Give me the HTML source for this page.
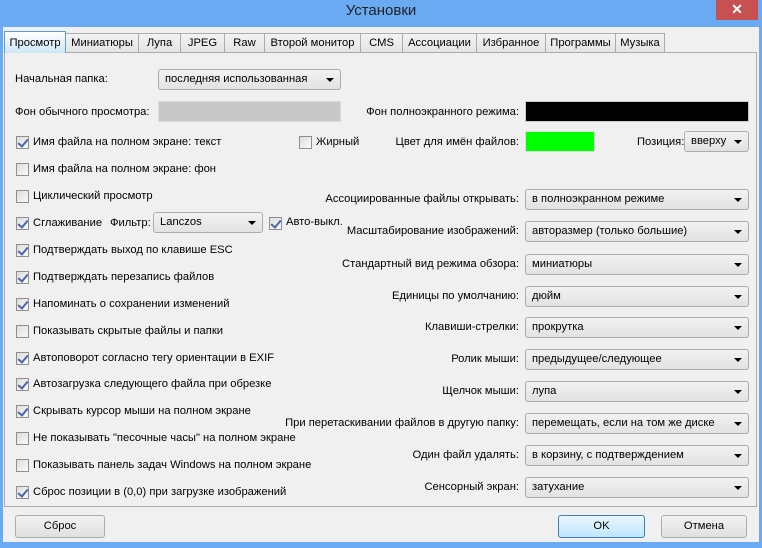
<!DOCTYPE html>
<html><head><meta charset="utf-8"><style>
*{box-sizing:border-box;margin:0;padding:0}
body{width:762px;height:548px;background:#6aaaf3;position:relative;overflow:hidden;font-family:"Liberation Sans",Arial,sans-serif;font-size:11.2px;color:#000}
.abs{position:absolute}
#client{position:absolute;left:3px;top:27px;width:756px;height:515px;background:#f0f0f0}
.title{position:absolute;left:0;width:762px;top:2px;text-align:center;font-size:15px;color:#222}
.close{position:absolute;left:716px;top:0;width:42px;height:20px;background:#c75050;color:#fff;text-align:center;font-size:14px;line-height:19px;font-weight:bold}
.tab{position:absolute;top:33px;height:20px;border:1px solid #acacac;border-bottom:none;background:linear-gradient(#f3f3f3,#e3e3e3);text-align:center;line-height:18px;white-space:nowrap}
.tab.act{top:31px;height:22px;background:linear-gradient(#fff,#cfe7f8);border-color:#5a9fd4;z-index:2;line-height:22px}
#panel{position:absolute;left:4px;top:52px;width:753px;height:455px;border:1px solid #acacac;background:#f0f0f0}
.lbl{position:absolute;white-space:nowrap;line-height:14px}
.r{text-align:right}
.cb{position:absolute;width:13px;height:13px;border:1px solid #8f8f8f;background:linear-gradient(135deg,#dcdcdc,#fafafa)}
.cb.c::after{content:"";position:absolute;left:3px;top:0px;width:4px;height:8px;border:solid #4a66a8;border-width:0 2px 2px 0;transform:rotate(40deg)}
.dd{position:absolute;height:21px;border:1px solid #acacac;border-radius:3px;background:linear-gradient(#f2f2f2,#e2e2e2);padding-left:6px;line-height:19px;white-space:nowrap}
.dd::after{content:"";position:absolute;right:6px;top:8px;border:4px solid transparent;border-top:4px solid #000;border-bottom:none}
.btn{position:absolute;top:515px;height:23px;border:1px solid #acacac;border-radius:3px;background:linear-gradient(#f2f2f2,#e0e0e0);text-align:center;line-height:21px}
.btn.ok{border-color:#3c7fb1;background:linear-gradient(#eaf6fd,#bee6fd)}
</style></head><body>
<div id="client"></div>
<div class="title">Установки</div>
<div class="close">✕</div>
<div class="tab act" style="left:4px;width:62px">Просмотр</div>
<div class="tab" style="left:65px;width:74px">Миниатюры</div>
<div class="tab" style="left:138px;width:43px">Лупа</div>
<div class="tab" style="left:180px;width:45px">JPEG</div>
<div class="tab" style="left:224px;width:41px">Raw</div>
<div class="tab" style="left:264px;width:97px">Второй монитор</div>
<div class="tab" style="left:360px;width:43px">CMS</div>
<div class="tab" style="left:402px;width:75px">Ассоциации</div>
<div class="tab" style="left:476px;width:70px">Избранное</div>
<div class="tab" style="left:545px;width:71px">Программы</div>
<div class="tab" style="left:615px;width:50px">Музыка</div>
<div id="panel"></div>

<div class="lbl" style="left:15px;top:72px">Начальная папка:</div>
<div class="dd" style="left:158px;top:69px;width:183px">последняя использованная</div>
<div class="lbl" style="left:15px;top:105px">Фон обычного просмотра:</div>
<div class="abs" style="left:158px;top:101px;width:183px;height:21px;background:#c8c8c8;border:1px solid #dadada"></div>
<div class="lbl r" style="left:300px;width:219px;top:105px">Фон полноэкранного режима:</div>
<div class="abs" style="left:525px;top:101px;width:224px;height:21px;background:#000;border:1px solid #ccc"></div>

<div class="cb c" style="left:16px;top:136px"></div><div class="lbl" style="left:33px;top:135px">Имя файла на полном экране: текст</div>
<div class="cb" style="left:299px;top:136px"></div><div class="lbl" style="left:316px;top:135px">Жирный</div>
<div class="lbl r" style="left:300px;width:219px;top:135px">Цвет для имён файлов:</div>
<div class="abs" style="left:525px;top:131px;width:70px;height:21px;background:#00ff00;border:1px solid #ddd"></div>
<div class="lbl" style="left:637px;top:135px">Позиция:</div>
<div class="dd" style="left:684px;top:131px;width:65px">вверху</div>

<div class="cb" style="left:16px;top:163px"></div><div class="lbl" style="left:33px;top:162px">Имя файла на полном экране: фон</div>
<div class="cb" style="left:16px;top:190px"></div><div class="lbl" style="left:33px;top:189px">Циклический просмотр</div>
<div class="cb c" style="left:16px;top:217px"></div><div class="lbl" style="left:33px;top:216px">Сглаживание</div>
<div class="lbl" style="left:110px;top:216px">Фильтр:</div>
<div class="dd" style="left:153px;top:212px;width:110px">Lanczos</div>
<div class="cb c" style="left:269px;top:217px"></div><div class="lbl" style="left:286px;top:215px">Авто-выкл.</div>
<div class="cb c" style="left:16px;top:244px"></div><div class="lbl" style="left:33px;top:243px">Подтверждать выход по клавише ESC</div>
<div class="cb c" style="left:16px;top:271px"></div><div class="lbl" style="left:33px;top:270px">Подтверждать перезапись файлов</div>
<div class="cb c" style="left:16px;top:298px"></div><div class="lbl" style="left:33px;top:297px">Напоминать о сохранении изменений</div>
<div class="cb" style="left:16px;top:325px"></div><div class="lbl" style="left:33px;top:324px">Показывать скрытые файлы и папки</div>
<div class="cb c" style="left:16px;top:352px"></div><div class="lbl" style="left:33px;top:351px">Автоповорот согласно тегу ориентации в EXIF</div>
<div class="cb c" style="left:16px;top:378px"></div><div class="lbl" style="left:33px;top:377px">Автозагрузка следующего файла при обрезке</div>
<div class="cb c" style="left:16px;top:405px"></div><div class="lbl" style="left:33px;top:404px">Скрывать курсор мыши на полном экране</div>
<div class="cb" style="left:16px;top:432px"></div><div class="lbl" style="left:33px;top:431px">Не показывать "песочные часы" на полном экране</div>
<div class="cb" style="left:16px;top:459px"></div><div class="lbl" style="left:33px;top:458px">Показывать панель задач Windows на полном экране</div>
<div class="cb c" style="left:16px;top:486px"></div><div class="lbl" style="left:33px;top:485px">Сброс позиции в (0,0) при загрузке изображений</div>

<div class="lbl r" style="left:200px;width:319px;top:192px">Ассоциированные файлы открывать:</div>
<div class="dd" style="left:525px;top:189px;width:224px">в полноэкранном режиме</div>
<div class="lbl r" style="left:200px;width:319px;top:224px">Масштабирование изображений:</div>
<div class="dd" style="left:525px;top:221px;width:224px">авторазмер (только большие)</div>
<div class="lbl r" style="left:200px;width:319px;top:257px">Стандартный вид режима обзора:</div>
<div class="dd" style="left:525px;top:254px;width:224px">миниатюры</div>
<div class="lbl r" style="left:200px;width:319px;top:289px">Единицы по умолчанию:</div>
<div class="dd" style="left:525px;top:286px;width:224px">дюйм</div>
<div class="lbl r" style="left:200px;width:319px;top:320px">Клавиши-стрелки:</div>
<div class="dd" style="left:525px;top:317px;width:224px">прокрутка</div>
<div class="lbl r" style="left:200px;width:319px;top:352px">Ролик мыши:</div>
<div class="dd" style="left:525px;top:349px;width:224px">предыдущее/следующее</div>
<div class="lbl r" style="left:200px;width:319px;top:384px">Щелчок мыши:</div>
<div class="dd" style="left:525px;top:381px;width:224px">лупа</div>
<div class="lbl r" style="left:200px;width:319px;top:416px">При перетаскивании файлов в другую папку:</div>
<div class="dd" style="left:525px;top:413px;width:224px">перемещать, если на том же диске</div>
<div class="lbl r" style="left:200px;width:319px;top:448px">Один файл удалять:</div>
<div class="dd" style="left:525px;top:445px;width:224px">в корзину, с подтверждением</div>
<div class="lbl r" style="left:200px;width:319px;top:480px">Сенсорный экран:</div>
<div class="dd" style="left:525px;top:477px;width:224px">затухание</div>

<div class="btn" style="left:15px;width:90px">Сброс</div>
<div class="btn ok" style="left:558px;width:87px">OK</div>
<div class="btn" style="left:661px;width:86px">Отмена</div>
</body></html>
